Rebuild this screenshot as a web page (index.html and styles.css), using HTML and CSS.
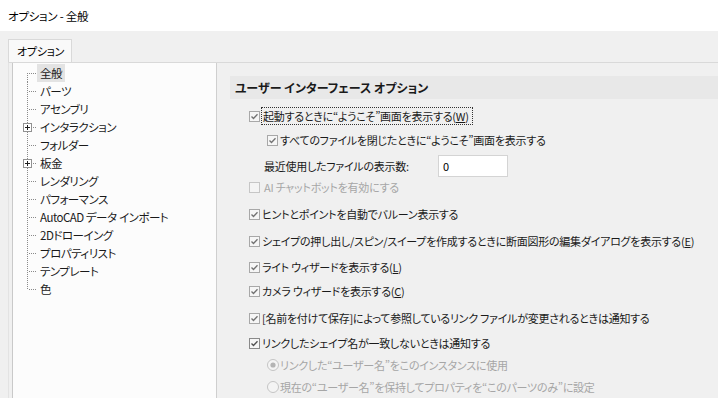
FILE: index.html
```html
<!DOCTYPE html>
<html lang="ja">
<head>
<meta charset="utf-8">
<title>オプション - 全般</title>
<link rel="stylesheet" href="styles.css">
</head>
<body>
<div class="window">
  <div class="titlebar">オプション - 全般</div>
  <div class="tabstrip">
    <div class="tab">オプション</div>
  </div>
  <div class="page">
    <div class="tree">
      <div class="node first"><span class="twig"></span><span class="label selected">全般</span></div>
      <div class="node"><span class="twig"></span><span class="label">パーツ</span></div>
      <div class="node"><span class="twig"></span><span class="label">アセンブリ</span></div>
      <div class="node"><span class="twig"><span class="exp"></span></span><span class="label">インタラクション</span></div>
      <div class="node"><span class="twig"></span><span class="label">フォルダー</span></div>
      <div class="node"><span class="twig"><span class="exp"></span></span><span class="label">板金</span></div>
      <div class="node"><span class="twig"></span><span class="label">レンダリング</span></div>
      <div class="node"><span class="twig"></span><span class="label">パフォーマンス</span></div>
      <div class="node"><span class="twig"></span><span class="label">AutoCAD データ<span class="sp"> </span>インポート</span></div>
      <div class="node"><span class="twig"></span><span class="label">2Dドローイング</span></div>
      <div class="node"><span class="twig"></span><span class="label">プロパティリスト</span></div>
      <div class="node"><span class="twig"></span><span class="label">テンプレート</span></div>
      <div class="node last"><span class="twig"></span><span class="label">色</span></div>
    </div>
    <div class="content">
      <div class="section">ユーザー インターフェース オプション</div>
      <div class="row r1 ind1">
        <svg class="cb" width="11" height="11" viewBox="0 0 11 11"><rect x="0.5" y="0.5" width="10" height="10" fill="#f6f6f6" stroke="#a8a8a8"/><path d="M2.5 5.5 L4.5 7.5 L8.5 3.2" fill="none" stroke="#727272" stroke-width="1.3"/></svg>
        <span class="text focus">起動するときに“ようこそ”画面を表示する(<u>W</u>)</span>
      </div>
      <div class="row r2 ind2">
        <svg class="cb" width="11" height="11" viewBox="0 0 11 11"><rect x="0.5" y="0.5" width="10" height="10" fill="#f6f6f6" stroke="#a8a8a8"/><path d="M2.5 5.5 L4.5 7.5 L8.5 3.2" fill="none" stroke="#727272" stroke-width="1.3"/></svg>
        <span class="text">すべてのファイルを閉じたときに“ようこそ”画面を表示する</span>
      </div>
      <div class="row r3 ind3">
        <span class="text recent">最近使用したファイルの表示数:</span>
        <span class="input">0</span>
      </div>
      <div class="row r4 ind1 disabled">
        <svg class="cb" width="11" height="11" viewBox="0 0 11 11"><rect x="0.5" y="0.5" width="10" height="10" fill="#f4f4f4" stroke="#c6c6c6"/></svg>
        <span class="text ai">AI チャットボットを有効にする</span>
      </div>
      <div class="row r5 ind1">
        <svg class="cb" width="11" height="11" viewBox="0 0 11 11"><rect x="0.5" y="0.5" width="10" height="10" fill="#f6f6f6" stroke="#a8a8a8"/><path d="M2.5 5.5 L4.5 7.5 L8.5 3.2" fill="none" stroke="#727272" stroke-width="1.3"/></svg>
        <span class="text">ヒントとポイントを自動でバルーン表示する</span>
      </div>
      <div class="row r6 ind1">
        <svg class="cb" width="11" height="11" viewBox="0 0 11 11"><rect x="0.5" y="0.5" width="10" height="10" fill="#f6f6f6" stroke="#a8a8a8"/><path d="M2.5 5.5 L4.5 7.5 L8.5 3.2" fill="none" stroke="#727272" stroke-width="1.3"/></svg>
        <span class="text">シェイプの押し出し/スピン/スイープを作成するときに断面図形の編集ダイアログを表示する(<u>E</u>)</span>
      </div>
      <div class="row r7 ind1">
        <svg class="cb" width="11" height="11" viewBox="0 0 11 11"><rect x="0.5" y="0.5" width="10" height="10" fill="#f6f6f6" stroke="#a8a8a8"/><path d="M2.5 5.5 L4.5 7.5 L8.5 3.2" fill="none" stroke="#727272" stroke-width="1.3"/></svg>
        <span class="text">ライト ウィザードを表示する(<u>L</u>)</span>
      </div>
      <div class="row r8 ind1">
        <svg class="cb" width="11" height="11" viewBox="0 0 11 11"><rect x="0.5" y="0.5" width="10" height="10" fill="#f6f6f6" stroke="#a8a8a8"/><path d="M2.5 5.5 L4.5 7.5 L8.5 3.2" fill="none" stroke="#727272" stroke-width="1.3"/></svg>
        <span class="text">カメラ ウィザードを表示する(<u>C</u>)</span>
      </div>
      <div class="row r9 ind1">
        <svg class="cb" width="11" height="11" viewBox="0 0 11 11"><rect x="0.5" y="0.5" width="10" height="10" fill="#f6f6f6" stroke="#a8a8a8"/><path d="M2.5 5.5 L4.5 7.5 L8.5 3.2" fill="none" stroke="#727272" stroke-width="1.3"/></svg>
        <span class="text">[名前を付けて保存]によって参照しているリンク ファイルが変更されるときは通知する</span>
      </div>
      <div class="row r10 ind1">
        <svg class="cb" width="11" height="11" viewBox="0 0 11 11"><rect x="0.5" y="0.5" width="10" height="10" fill="#f6f6f6" stroke="#8a8a8a"/><path d="M2.5 5.5 L4.5 7.5 L8.5 3.2" fill="none" stroke="#505050" stroke-width="1.3"/></svg>
        <span class="text">リンクしたシェイプ名が一致しないときは通知する</span>
      </div>
      <div class="row r11 ind2 disabled">
        <svg class="rb" width="12" height="12" viewBox="0 0 12 12"><circle cx="6" cy="6" r="5.5" fill="#f4f4f4" stroke="#c4c4c4"/><circle cx="6" cy="6" r="2.6" fill="#b4b4b4"/></svg>
        <span class="text">リンクした“ユーザー名”をこのインスタンスに使用</span>
      </div>
      <div class="row r12 ind2 disabled">
        <svg class="rb" width="12" height="12" viewBox="0 0 12 12"><circle cx="6" cy="6" r="5.5" fill="#f4f4f4" stroke="#c4c4c4"/></svg>
        <span class="text">現在の“ユーザー名”を保持してプロパティを“このパーツのみ”に設定</span>
      </div>
    </div>
  </div>
</div>
</body>
</html>
```

FILE: styles.css
```css
html, body {
  margin: 0;
  padding: 0;
}
body {
  width: 718px;
  height: 398px;
  overflow: hidden;
  background: #f0f0f0;
  font-family: "Noto Sans CJK JP", "Noto Sans", sans-serif;
  font-size: 11px;
  letter-spacing: -0.25px;
  color: #1a1a1a;
  font-feature-settings: "palt";
}
.window {
  display: flex;
  flex-direction: column;
  height: 398px;
}
.titlebar {
  height: 31px;
  line-height: 32px;
  background: #ffffff;
  padding-left: 8px;
  font-size: 11.5px;
  color: #000;
  flex: none;
}
.tabstrip {
  height: 31px;
  display: flex;
  align-items: flex-end;
  padding-left: 8px;
  flex: none;
}
.tab {
  height: 22px;
  line-height: 22px;
  padding: 0 7px 0 8px;
  background: #f9f9f9;
  border: 1px solid #d9d9d9;
  border-bottom: none;
  color: #000;
}
.page {
  flex: 1;
  display: flex;
  margin-left: 8px;
  border-top: 1px solid #d9d9d9;
  border-left: 1px solid #e3e3e3;
  min-height: 0;
}
.tree {
  flex: none;
  width: 203px;
  margin-left: 3px;
  padding-top: 1px;
  background: #fcfcfc;
  border-left: 1px solid #c9c9c9;
  border-right: 1px solid #cfcfcf;
}
.node {
  display: flex;
  height: 18px;
  line-height: 18px;
  padding-left: 14px;
}
.twig {
  position: relative;
  flex: none;
  width: 10px;
  height: 18px;
  background:
    repeating-linear-gradient(to right, #8a8a8a 0 1px, transparent 1px 2px) 2px 9px / 8px 1px no-repeat,
    repeating-linear-gradient(to bottom, #8a8a8a 0 1px, transparent 1px 2px) 0 0 / 1px 18px no-repeat;
}
.node.first .twig {
  background:
    repeating-linear-gradient(to right, #8a8a8a 0 1px, transparent 1px 2px) 2px 9px / 8px 1px no-repeat,
    repeating-linear-gradient(to bottom, #8a8a8a 0 1px, transparent 1px 2px) 0 9px / 1px 9px no-repeat;
}
.node.last .twig {
  background:
    repeating-linear-gradient(to right, #8a8a8a 0 1px, transparent 1px 2px) 2px 9px / 8px 1px no-repeat,
    repeating-linear-gradient(to bottom, #8a8a8a 0 1px, transparent 1px 2px) 0 0 / 1px 10px no-repeat;
}
.exp {
  position: absolute;
  left: -4px;
  top: 5px;
  width: 7px;
  height: 7px;
  border: 1px solid #919191;
  background:
    linear-gradient(#1e1e1e, #1e1e1e) center / 5px 1px no-repeat,
    linear-gradient(#1e1e1e, #1e1e1e) center / 1px 5px no-repeat,
    #ffffff;
}
.label {
  padding: 0 3px;
  white-space: nowrap;
  color: #1a1a1a;
  font-size: 11.5px;
  letter-spacing: -0.5px;
}
.sp {
  letter-spacing: 0;
}
.label.selected {
  background: #e3e3e3;
}
.content {
  flex: 1;
  display: flex;
  flex-direction: column;
  min-width: 0;
}
.section {
  margin: 13px 0 0 13px;
  height: 23px;
  line-height: 23px;
  padding-left: 5px;
  background: #e8e8e8;
  font-weight: bold;
  font-size: 12px;
  letter-spacing: 0;
  color: #1a1a1a;
  white-space: nowrap;
}
.row {
  display: flex;
  align-items: center;
  height: 18px;
  white-space: nowrap;
}
.ind1 { padding-left: 32px; }
.ind2 { padding-left: 50px; }
.ind3 { padding-left: 47px; }
.cb, .rb {
  flex: none;
  margin-right: 2px;
}
.rb { margin-right: 1px; }
.text {
  line-height: 16px;
}
.ai {
  padding-left: 2px;
}
.focus {
  outline: 1px dotted #333;
  outline-offset: 0;
  padding: 0 3px 0 1px;
}
.disabled .text {
  color: #a6a6a6;
}
.r1 { margin-top: 8px; }
.r2 { margin-top: 6px; }
.r3 { margin-top: 6px; height: 22px; }
.r4 { margin-top: 1px; }
.r5 { margin-top: 9px; }
.r6 { margin-top: 9px; }
.r7 { margin-top: 8px; }
.r8 { margin-top: 6px; }
.r9 { margin-top: 9px; }
.r10 { margin-top: 7px; }
.r11 { margin-top: 4px; }
.r12 { margin-top: 4px; }
.recent {
  width: 174px;
}
.input {
  width: 64px;
  height: 20px;
  line-height: 20px;
  padding-left: 4px;
  background: #ffffff;
  border: 1px solid #d4d4d4;
  color: #000;
}
```
